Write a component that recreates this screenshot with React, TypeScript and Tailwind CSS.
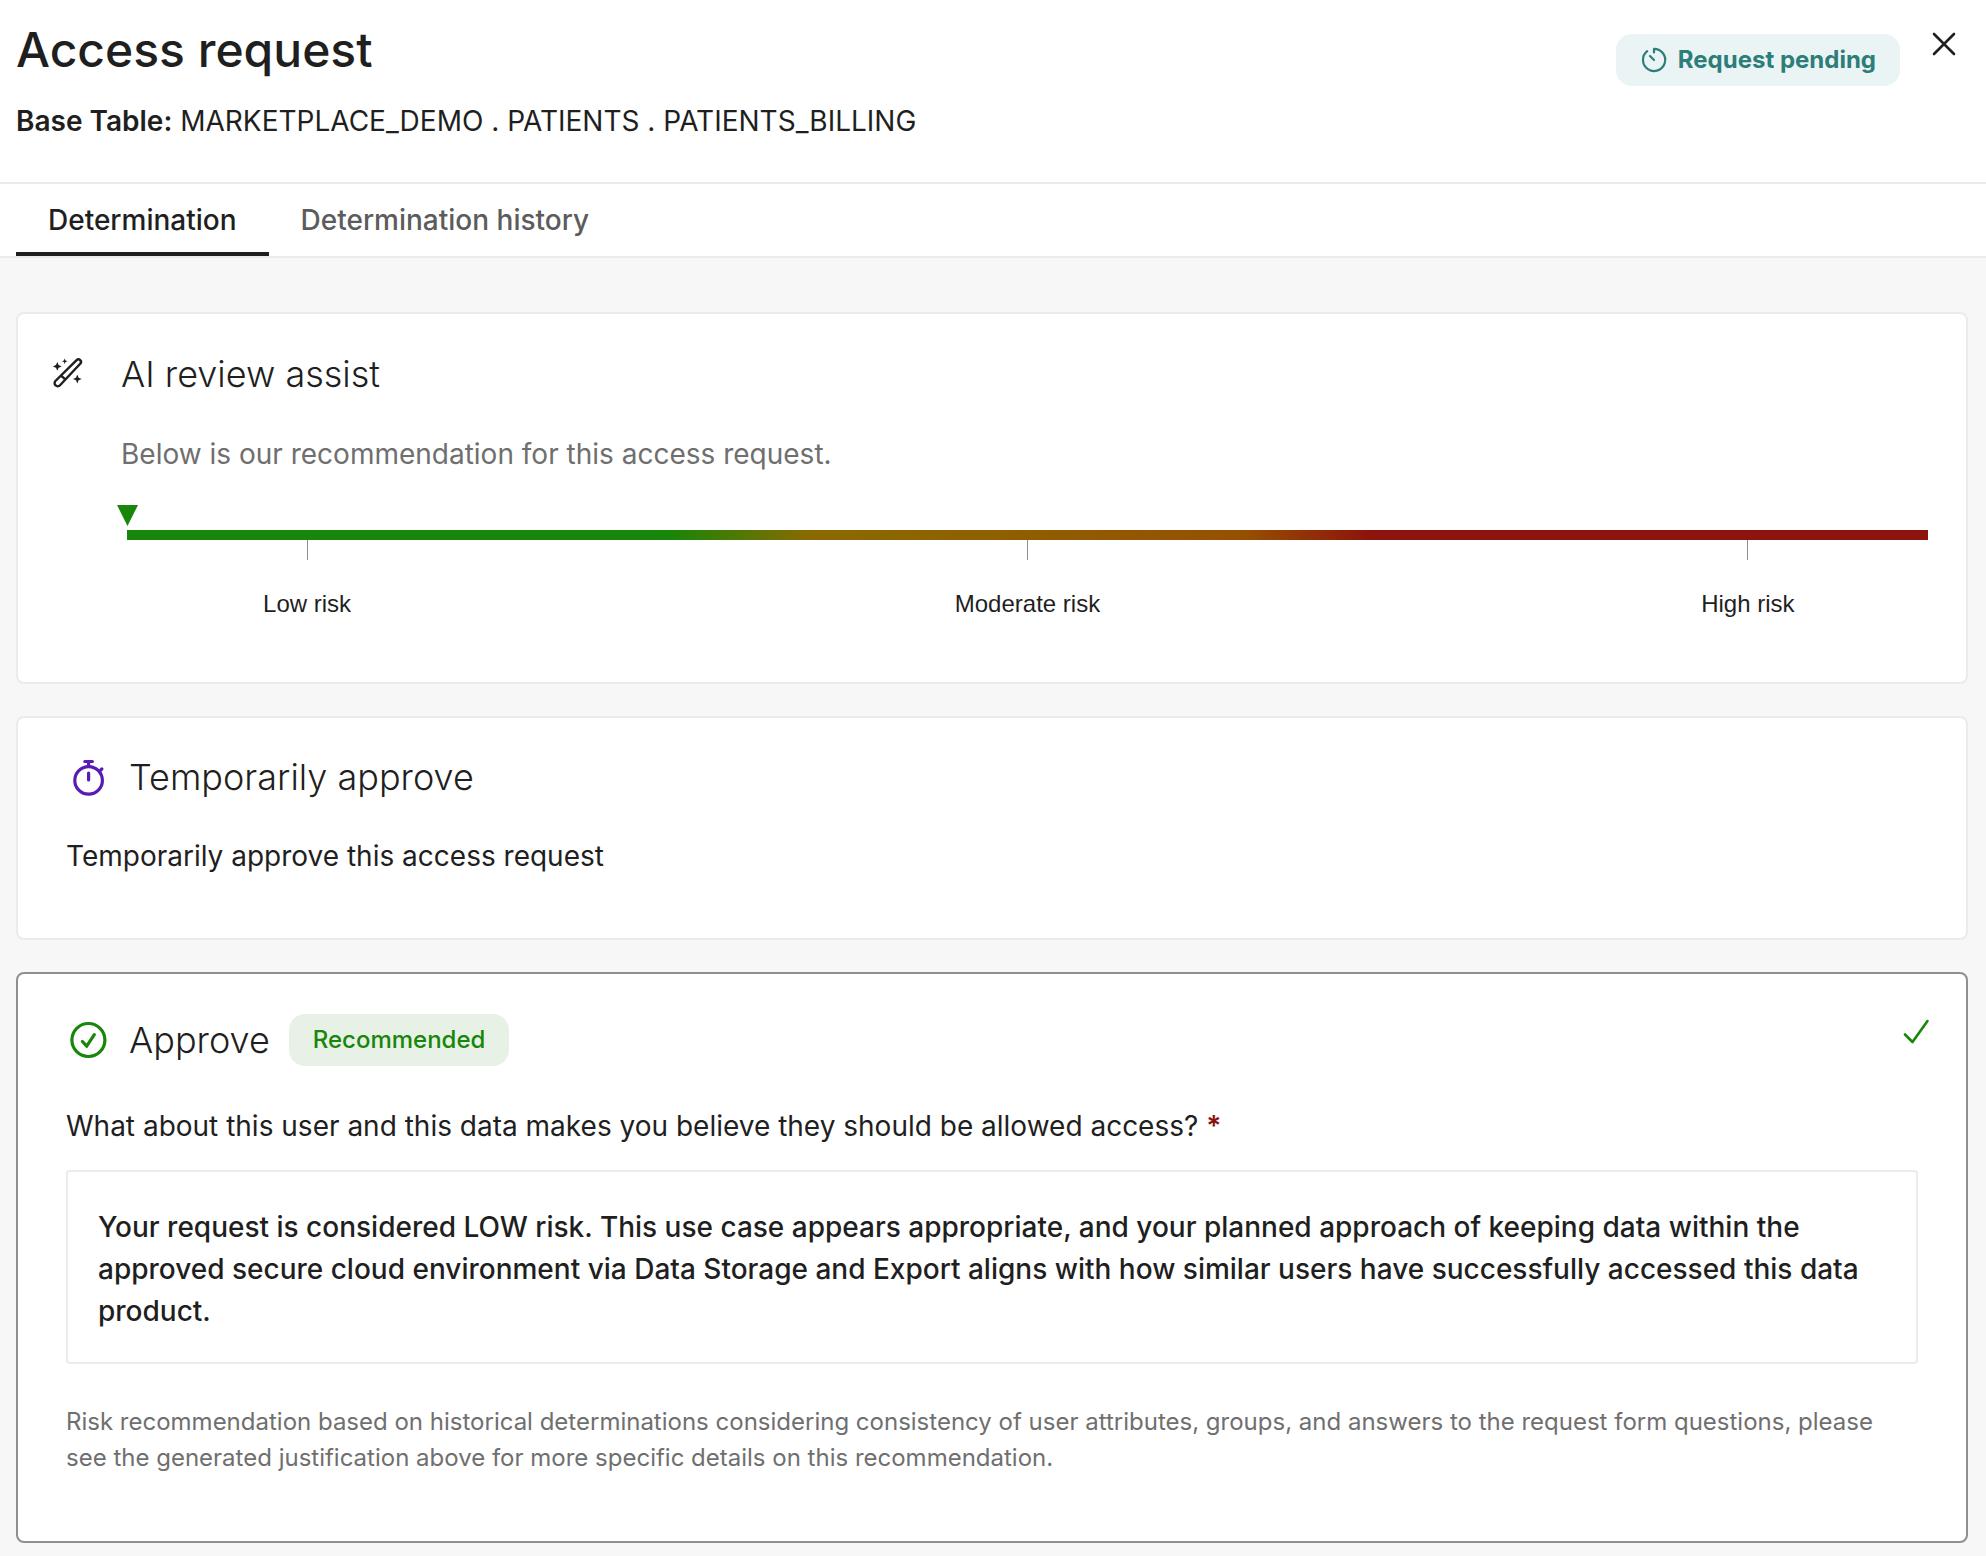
import type { ReactNode } from "react";

const RISK_LEVELS = [
  { label: "Low risk", width: "w-1/5" },
  { label: "Moderate risk", width: "w-3/5" },
  { label: "High risk", width: "w-1/5" },
];

const JUSTIFICATION =
  "Your request is considered LOW risk. This use case appears appropriate, and your planned approach of keeping data within the approved secure cloud environment via Data Storage and Export aligns with how similar users have successfully accessed this data product.";

function PendingIcon() {
  return (
    <svg
      className="h-7 w-7"
      viewBox="0 0 28 28"
      fill="none"
      stroke="currentColor"
      strokeWidth={2.2}
      strokeLinecap="round"
      strokeLinejoin="round"
    >
      <path d="M14 6.5V2.8A11.100 11.100 0 1 1 7.200 5.200" />
      <path d="M10 10l4 4" />
    </svg>
  );
}

function CloseIcon() {
  return (
    <svg
      className="h-8 w-8"
      viewBox="0 0 32 32"
      fill="none"
      stroke="currentColor"
      strokeWidth={2.6}
      strokeLinecap="round"
    >
      <path d="M6 6l20 20M26 6L6 26" />
    </svg>
  );
}

function WandIcon() {
  return (
    <svg
      className="h-8 w-8"
      viewBox="0 0 32 32"
      fill="none"
      stroke="currentColor"
      strokeWidth={2.4}
      strokeLinejoin="round"
    >
      <path d="M3.400 25L24.600 4.200a2.400 2.400 0 0 1 3.600 3.600L8 29.200a3.100 3.100 0 0 1-4.600-4.200z" />
      <path d="M9 19.600l4 3.600" />
      <path
        d="M5.300 6l1.300 3.100 3.100 1.300-3.100 1.300-1.300 3.100L4 11.700.9 10.400 4 9.100zM12.700 2.500l.8 2 2 .8-2 .8-.8 2-.8-2-2-.8 2-.8zM25.300 18.600l1.300 3.100 3.100 1.300-3.100 1.300-1.300 3.100-1.300-3.100-3.100-1.300 3.100-1.300z"
        fill="currentColor"
        stroke="none"
      />
    </svg>
  );
}

function StopwatchIcon() {
  return (
    <svg
      className="h-11 w-11"
      viewBox="0 0 44 44"
      fill="none"
      stroke="currentColor"
      strokeWidth={3.2}
      strokeLinecap="round"
    >
      <circle cx="22.600" cy="25.400" r="13.800" />
      <path d="M22.600 18v7M22.600 7v4M18.800 6.500h7.600M34 15.800l1.800-1.800" />
    </svg>
  );
}

function CircleCheckIcon() {
  return (
    <svg
      className="h-11 w-11"
      viewBox="0 0 44 44"
      fill="none"
      stroke="currentColor"
      strokeWidth={3.2}
      strokeLinecap="round"
      strokeLinejoin="round"
    >
      <circle cx="22.400" cy="22" r="16.500" />
      <path d="M16.400 23.500l4.300 4.700 7.600-11.500" />
    </svg>
  );
}

function SelectedIcon() {
  return (
    <svg
      className="h-7 w-7"
      viewBox="0 0 28 28"
      fill="none"
      stroke="currentColor"
      strokeWidth={2.6}
      strokeLinecap="round"
      strokeLinejoin="round"
    >
      <path d="M3 17.500l7.500 7.500L25.500 4" />
    </svg>
  );
}

function Card({
  selected = false,
  children,
}: {
  selected?: boolean;
  children: ReactNode;
}) {
  return (
    <section
      className={`rounded-lg border-2 bg-white ${selected ? "border-[#8f8f8f]" : "border-[#ebebeb]"}`}
    >
      {children}
    </section>
  );
}

function RiskScale() {
  return (
    <div className="ml-1.5">
      <svg
        className="-ml-2.5 h-[21px] w-[21px]"
        viewBox="0 0 20 20"
        fill="#17860a"
      >
        <path d="M0 0h20L10 20z" />
      </svg>
      <div className="mt-1 h-2.5 bg-[linear-gradient(90deg,#17860a_30%,#8a6a00_38%,#965000_62%,#8c140c_69%)]" />
      <div className="flex">
        {RISK_LEVELS.map(({ label, width }) => (
          <div key={label} className={`flex flex-col items-center gap-7 ${width}`}>
            <span className="h-5 w-px bg-[#8f8f8f]" />
            <span className="font-['Liberation_Sans',Arial,sans-serif] text-2xl leading-8">
              {label}
            </span>
          </div>
        ))}
      </div>
    </div>
  );
}

export default function App() {
  return (
    <div className="min-h-screen bg-[#f7f7f7] font-[Inter,sans-serif] text-[28px] leading-[42px] text-[#1f1f1f]">
      <header className="flex items-start justify-between border-b-2 border-[#ebebeb] bg-white pr-[26px] pl-4">
        <div className="pt-5 pb-10">
          <h1 className="text-5xl leading-[60px] font-medium">Access request</h1>
          <p className="mt-5">
            <strong className="font-semibold">Base Table:</strong>{" "}
            MARKETPLACE_DEMO . PATIENTS . PATIENTS_BILLING
          </p>
        </div>
        <div className="flex items-start gap-7">
          <span className="mt-[34px] flex h-13 items-center gap-2.5 rounded-2xl bg-[#eaf4f5] px-6 text-2xl font-bold text-[#2d7d78]">
            <PendingIcon />
            Request pending
          </span>
          <button type="button" aria-label="Close" className="mt-7">
            <CloseIcon />
          </button>
        </div>
      </header>

      <div role="tablist" className="flex border-b-2 border-[#ebebeb] bg-white px-4">
        <button
          type="button"
          role="tab"
          aria-selected="true"
          className="h-[72px] border-b-4 border-[#1f1f1f] px-8 pt-1 font-medium"
        >
          Determination
        </button>
        <button
          type="button"
          role="tab"
          aria-selected="false"
          className="h-[72px] border-b-4 border-transparent px-8 pt-1 font-medium text-[#5c5c5c]"
        >
          Determination history
        </button>
      </div>

      <main className="flex flex-col gap-8 pt-[54px] pr-[18px] pb-3 pl-4">
        <Card>
          <div className="flex gap-[37px] pt-9 pr-[38px] pb-[62px] pl-[34px]">
            <span className="mt-1.5">
              <WandIcon />
            </span>
            <div className="flex-1">
              <h2 className="text-4xl leading-[48px] font-light">AI review assist</h2>
              <p className="mt-[35px] mb-[30px] text-[#6f6f6f]">
                Below is our recommendation for this access request.
              </p>
              <RiskScale />
            </div>
          </div>
        </Card>

        <Card>
          <div className="px-12 pt-[33px] pb-[61px]">
            <div className="flex items-center gap-[19px]">
              <span className="text-[#5a1bb5]">
                <StopwatchIcon />
              </span>
              <h2 className="text-4xl leading-[52px] font-light">
                Temporarily approve
              </h2>
            </div>
            <p className="mt-8">Temporarily approve this access request</p>
          </div>
        </Card>

        <Card selected>
          <div className="px-12 pt-10 pb-[65px]">
            <div className="flex items-center gap-[19px]">
              <span className="text-[#17860a]">
                <CircleCheckIcon />
              </span>
              <h2 className="text-4xl leading-[52px] font-light">Approve</h2>
              <span className="flex h-13 items-center rounded-2xl bg-[#e7f1e5] px-6 text-2xl font-medium text-[#17860a]">
                Recommended
              </span>
              <span className="-mr-3 mb-[18px] ml-auto text-[#17860a]">
                <SelectedIcon />
              </span>
            </div>
            <label htmlFor="justification" className="mt-[39px] block">
              What about this user and this data makes you believe they should be
              allowed access? <span className="font-semibold text-[#8c140c]">*</span>
            </label>
            <textarea
              id="justification"
              rows={3}
              defaultValue={JUSTIFICATION}
              className="mt-[23px] block w-full resize-none overflow-hidden rounded border-2 border-[#ebebeb] bg-white px-[30px] pt-[34px] pb-[30px] font-medium"
            />
            <p className="mt-10 text-2xl leading-9 text-[#6f6f6f]">
              Risk recommendation based on historical determinations considering
              consistency of user attributes, groups, and answers to the request
              form questions, please see the generated justification above for more
              specific details on this recommendation.
            </p>
          </div>
        </Card>
      </main>
    </div>
  );
}
